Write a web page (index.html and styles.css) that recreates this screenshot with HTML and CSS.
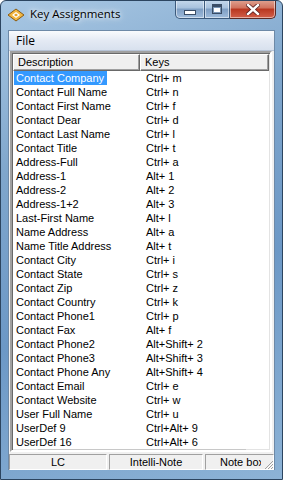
FILE: index.html
```html
<!DOCTYPE html>
<html lang="en">
<head>
  <meta charset="UTF-8" />
  <title>Key Assignments</title>
  <link rel="stylesheet" href="styles.css">
</head>
<body>
  <div class="window">
    <div class="titlebar">
      <svg class="app-icon" width="18" height="14" viewBox="0 0 18 14">
        <path d="M9 1 L17 7 L9 13 L1 7 Z" fill="#f2b640" stroke="#8a5a10" stroke-width="1"/>
        <path d="M5 7 L9 4 L13 7 L9 10 Z" fill="#fff"/>
        <path d="M7 7 L9 5.5 L11 7 L9 8.5 Z" fill="#e8a020"/>
      </svg>
      <span class="title">Key Assignments</span>
      <div class="caption-buttons">
        <div class="cbtn min"><span class="min-glyph"></span></div>
        <div class="cbtn max"><span class="max-glyph"></span></div>
        <div class="cbtn close">
          <svg width="14" height="11" viewBox="0 0 14 11">
            <path d="M2 1 L12 10 M12 1 L2 10" stroke="#5a2020" stroke-width="4" stroke-linecap="square"/>
            <path d="M2 1 L12 10 M12 1 L2 10" stroke="#fff" stroke-width="2.4" stroke-linecap="square"/>
          </svg>
        </div>
      </div>
    </div>

    <div class="client">
      <div class="menubar"><span class="menu-item">File</span></div>

      <div class="listview">
        <div class="lv-header">
          <div class="col col-desc">Description</div>
          <div class="col col-keys">Keys</div>
        </div>
        <div class="lv-body">
          <div class="row"><span class="c1"><span class="sel">Contact Company</span></span><span class="c2">Ctrl+ m</span></div>
          <div class="row"><span class="c1">Contact Full Name</span><span class="c2">Ctrl+ n</span></div>
          <div class="row"><span class="c1">Contact First Name</span><span class="c2">Ctrl+ f</span></div>
          <div class="row"><span class="c1">Contact Dear</span><span class="c2">Ctrl+ d</span></div>
          <div class="row"><span class="c1">Contact Last Name</span><span class="c2">Ctrl+ l</span></div>
          <div class="row"><span class="c1">Contact Title</span><span class="c2">Ctrl+ t</span></div>
          <div class="row"><span class="c1">Address-Full</span><span class="c2">Ctrl+ a</span></div>
          <div class="row"><span class="c1">Address-1</span><span class="c2">Alt+ 1</span></div>
          <div class="row"><span class="c1">Address-2</span><span class="c2">Alt+ 2</span></div>
          <div class="row"><span class="c1">Address-1+2</span><span class="c2">Alt+ 3</span></div>
          <div class="row"><span class="c1">Last-First Name</span><span class="c2">Alt+ l</span></div>
          <div class="row"><span class="c1">Name Address</span><span class="c2">Alt+ a</span></div>
          <div class="row"><span class="c1">Name Title Address</span><span class="c2">Alt+ t</span></div>
          <div class="row"><span class="c1">Contact City</span><span class="c2">Ctrl+ i</span></div>
          <div class="row"><span class="c1">Contact State</span><span class="c2">Ctrl+ s</span></div>
          <div class="row"><span class="c1">Contact Zip</span><span class="c2">Ctrl+ z</span></div>
          <div class="row"><span class="c1">Contact Country</span><span class="c2">Ctrl+ k</span></div>
          <div class="row"><span class="c1">Contact Phone1</span><span class="c2">Ctrl+ p</span></div>
          <div class="row"><span class="c1">Contact Fax</span><span class="c2">Alt+ f</span></div>
          <div class="row"><span class="c1">Contact Phone2</span><span class="c2">Alt+Shift+ 2</span></div>
          <div class="row"><span class="c1">Contact Phone3</span><span class="c2">Alt+Shift+ 3</span></div>
          <div class="row"><span class="c1">Contact Phone Any</span><span class="c2">Alt+Shift+ 4</span></div>
          <div class="row"><span class="c1">Contact Email</span><span class="c2">Ctrl+ e</span></div>
          <div class="row"><span class="c1">Contact Website</span><span class="c2">Ctrl+ w</span></div>
          <div class="row"><span class="c1">User Full Name</span><span class="c2">Ctrl+ u</span></div>
          <div class="row"><span class="c1">UserDef 9</span><span class="c2">Ctrl+Alt+ 9</span></div>
          <div class="row"><span class="c1">UserDef 16</span><span class="c2">Ctrl+Alt+ 6</span></div>
        </div>
        <div class="hscroll-edge"></div>
      </div>

      <div class="statusbar">
        <div class="panel p1">LC</div>
        <div class="panel p2">Intelli-Note</div>
        <div class="panel p3"><span class="clip">Note box</span></div>
        <svg class="grip" width="12" height="12" viewBox="0 0 12 12">
          <path d="M11 3 L3 11 M11 6 L6 11 M11 9 L9 11" stroke="#a0a0a0" stroke-width="1"/>
          <path d="M12 4 L4 12 M12 7 L7 12 M12 10 L10 12" stroke="#fff" stroke-width="1"/>
        </svg>
      </div>
    </div>
  </div>
</body>
</html>
```

FILE: styles.css
```css
html, body {
  margin: 0;
  padding: 0;
  background: #fff;
}
.window {
  width: 283px;
  height: 480px;
  box-sizing: border-box;
  border: 1px solid #2c4560;
  border-radius: 6px 6px 0 0;
  background: linear-gradient(160deg, #a9c8e4 0%, #7fa6cc 30%, #6c98c6 60%, #8db3d6 100%);
  display: flex;
  flex-direction: column;
  overflow: hidden;
}
.titlebar {
  height: 29px;
  display: flex;
  align-items: flex-start;
  position: relative;
  flex-shrink: 0;
}
.app-icon {
  margin: 7px 0 0 6px;
}
.title {
  margin: 5px 0 0 5px;
  font-family: "Open Sans", "Noto Sans", sans-serif;
  font-size: 11.5px;
  color: #000;
  text-shadow: 0 0 8px #fff, 0 0 4px #fff;
}
.caption-buttons {
  position: absolute;
  top: -1px;
  right: 6px;
  display: flex;
  height: 20px;
}
.cbtn {
  height: 19px;
  box-sizing: border-box;
  border: 1px solid #3c5a7c;
  border-top: none;
  display: flex;
  align-items: center;
  justify-content: center;
  background: linear-gradient(#c6d9ec 0%, #a7c1dd 45%, #7e9ec3 50%, #9fbcdc 100%);
  box-shadow: inset 0 0 0 1px rgba(255,255,255,0.5);
}
.cbtn.min {
  width: 30px;
  border-radius: 0 0 0 5px;
}
.cbtn.max {
  width: 25px;
  border-left: none;
}
.cbtn.close {
  width: 46px;
  border-left: none;
  border-color: #5c2a24;
  border-radius: 0 0 5px 0;
  background: linear-gradient(#e0a493 0%, #d0715c 45%, #b8361f 50%, #d2604a 100%);
}
.min-glyph {
  width: 10px;
  height: 3px;
  margin-top: 6px;
  background: #fff;
  border: 1px solid #3a4d66;
}
.max-glyph {
  width: 8px;
  height: 6px;
  border: 1px solid #3a4d66;
  border-top-width: 3px;
  background: #fff;
  box-shadow: inset 0 0 0 1px #7b96b5;
}

.client {
  flex: 1;
  margin: 0 7px 9px 7px;
  background: #f0f0f0;
  border: 1px solid #6d89a7;
  border-bottom: none;
  display: flex;
  flex-direction: column;
  font-family: "Liberation Sans", Arial, sans-serif;
  font-size: 11px;
  color: #000;
}
.menubar {
  height: 19px;
  background: linear-gradient(#f9fbfd, #e4eaf4 50%, #d8e1ee);
  border-bottom: 1px solid #b6c3d6;
  display: flex;
  align-items: center;
  font-family: "Open Sans", "Noto Sans", sans-serif;
  font-size: 12px;
}
.menu-item {
  padding-left: 7px;
}
.listview {
  flex: 1;
  margin: 0 2px 0 1px;
  background: #fff;
  border: 2px solid;
  border-color: #a0a0a0 #fff #fff #a0a0a0;
  box-shadow: inset 1px 1px 0 #696969, inset -1px -1px 0 #e3e3e3;
  padding: 1px 1px 0 1px;
  display: flex;
  flex-direction: column;
  position: relative;
  overflow: hidden;
}
.lv-header {
  display: flex;
  height: 17px;
  flex-shrink: 0;
}
.col {
  box-sizing: border-box;
  height: 17px;
  line-height: 15px;
  background: #f0f0f0;
  border: 1px solid;
  border-color: #fff #696969 #696969 #fff;
  box-shadow: inset -1px -1px 0 #a0a0a0;
  padding-left: 4px;
}
.col-desc {
  width: 127px;
}
.col-keys {
  flex: 1;
  padding-left: 4px;
}
.row {
  display: flex;
  height: 14px;
  line-height: 14px;
  white-space: nowrap;
}
.c1 {
  width: 130px;
  padding-left: 3px;
}
.c2 {
  flex: 1;
}
.sel {
  background: #3399ff;
  color: #fff;
  padding: 0 3px 0 2px;
  margin-left: -2px;
  display: inline-block;
}
.hscroll-edge {
  position: absolute;
  left: 26px;
  right: 24px;
  bottom: 0;
  height: 1px;
  background: #c8c8c8;
}
.statusbar {
  height: 18px;
  flex-shrink: 0;
  display: flex;
  align-items: flex-end;
  padding: 2px 0 0 0;
  box-sizing: border-box;
  position: relative;
}
.panel {
  box-sizing: border-box;
  height: 16px;
  line-height: 15px;
  text-align: center;
  border: 1px solid;
  border-color: #a0a0a0 #fff #fff #a0a0a0;
  margin-right: 2px;
  white-space: nowrap;
  overflow: hidden;
}
.p1 { width: 98px; }
.p2 { width: 94px; }
.p3 { flex: 1; margin-right: 0; text-align: left; padding-left: 14px; }
.clip {
  display: inline-block;
  width: 41px;
  overflow: hidden;
  vertical-align: top;
}
.grip {
  position: absolute;
  right: 0;
  bottom: 0;
}
```
